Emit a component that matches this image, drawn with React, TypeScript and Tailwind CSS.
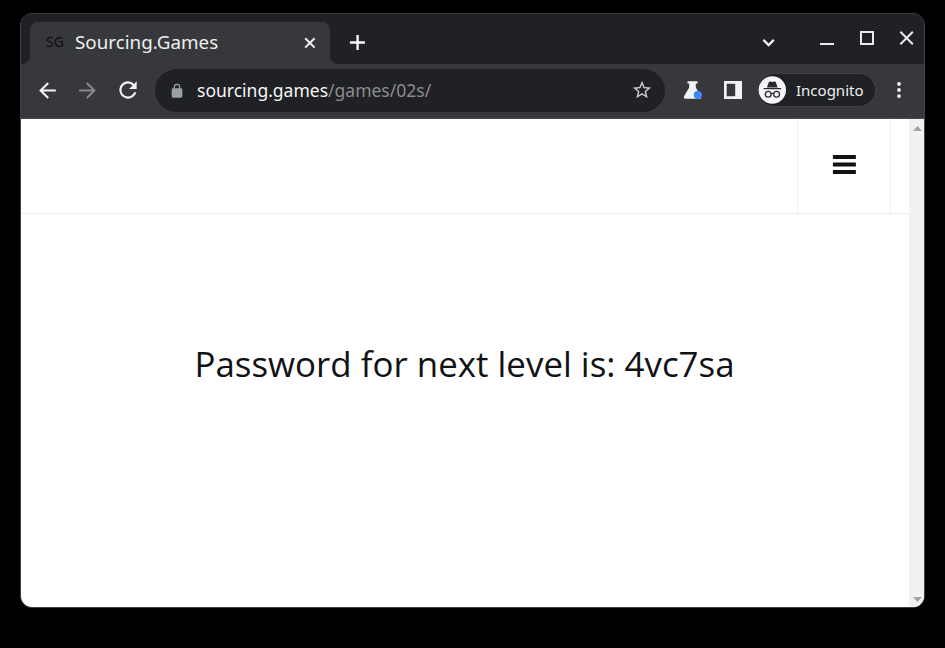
import React from "react";

function TabStrip() {
  return (
    <div className="flex h-[50px] shrink-0 bg-[#202124]">
      <div className="flex w-[9px] flex-col bg-[#37383b]">
        <div className="h-full rounded-br-[8px] bg-[#202124]" />
      </div>
      <div className="w-[300px] bg-[#202124] pt-2">
        <div className="flex h-[42px] items-center rounded-t-[8px] bg-[#37383b] pb-[2px] pl-[16px]">
          <span className="w-[29px] whitespace-nowrap text-[14px] leading-none text-[#0c0d0e]">SG</span>
          <span className="w-[227px] whitespace-nowrap text-[18.8px] leading-6 text-[#eeeff1]">Sourcing.Games</span>
          <svg className="mt-px size-4" viewBox="0 0 16 16" stroke="#f1f3f4" strokeWidth="2">
            <path d="M3.2 3.2l9.4 9.4M12.6 3.2l-9.4 9.4" />
          </svg>
        </div>
      </div>
      <div className="flex flex-1 bg-[#37383b]">
        <div className="flex flex-1 items-center rounded-bl-[8px] bg-[#202124]">
          <svg className="ml-[19px] mt-[6px] size-4" viewBox="0 0 16 16" stroke="#f8f9fa" strokeWidth="2.4">
            <path d="M8.6 1v15M.9 8.5h15" />
          </svg>
          <svg className="ml-[396px] mt-[6px] size-4" viewBox="0 0 16 16" fill="none" stroke="#f1f3f4" strokeWidth="2.2">
            <path d="M2.4 5.9L7.6 11.1l5.2-5.2" />
          </svg>
          <svg className="ml-[42px] size-4" viewBox="0 0 16 16" fill="none" stroke="#e8eaed" strokeWidth="2">
            <path d="M1 13h14" />
          </svg>
          <svg className="ml-[24px] mt-[-2px] size-4" viewBox="0 0 16 16" fill="none" stroke="#e8eaed" strokeWidth="2">
            <path d="M2 2h12v12H2z" />
          </svg>
          <svg className="ml-[24px] mt-[-2px] size-4" viewBox="0 0 16 16" fill="none" stroke="#e8eaed" strokeWidth="2">
            <path d="M1.4 1.8l12.4 12.4M13.8 1.8L1.4 14.2" />
          </svg>
        </div>
      </div>
    </div>
  );
}

function Toolbar() {
  return (
    <div className="flex h-[55px] shrink-0 items-center border-b border-[#49494c] bg-[#37383b] pb-[2px]">
      <svg className="ml-[14px] size-[25px] shrink-0" viewBox="0 0 24 24" fill="#f1f3f4">
        <path d="M20 11H7.83l5.59-5.59L12 4l-8 8 8 8 1.41-1.41L7.83 13H20v-2z" />
      </svg>
      <svg className="ml-[15px] size-[25px] shrink-0" viewBox="0 0 24 24" fill="#87888b">
        <path d="M12 4l-1.41 1.41L16.17 11H4v2h12.17l-5.58 5.59L12 20l8-8z" />
      </svg>
      <svg className="ml-[15px] size-[26px] shrink-0" viewBox="0 0 24 24" fill="#f1f3f4">
        <path d="M17.65 6.35A7.96 7.96 0 0 0 12 4a8 8 0 1 0 7.73 10h-2.08A6 6 0 1 1 12 6c1.66 0 3.14.69 4.22 1.78L13 11h7V4l-2.35 2.35z" />
      </svg>
      <div className="ml-[14px] flex h-[43px] w-[510px] shrink-0 items-center rounded-full bg-[#202124]">
        <svg className="ml-[14px] mt-[2px] size-4" viewBox="0 0 24 24" fill="#9aa0a6">
          <path d="M18 8h-1V6A5 5 0 0 0 7 6v2H6a2 2 0 0 0-2 2v10c0 1.1.9 2 2 2h12a2 2 0 0 0 2-2V10a2 2 0 0 0-2-2zM8.9 8V6a3.1 3.1 0 0 1 6.2 0v2z" />
        </svg>
        <span className="ml-[12px] w-[434px] whitespace-nowrap text-[17.5px] leading-6 text-[#f4f5f6]">
          sourcing.games<span className="text-[#8b8c8f]">/games/02s/</span>
        </span>
        <svg className="size-[22px]" viewBox="0 0 24 24" fill="#c8cacd">
          <path d="M22 9.24l-7.19-.62L12 2 9.19 8.63 2 9.24l5.46 4.73L5.82 21 12 17.27 18.18 21l-1.63-7.03L22 9.24zM12 15.4l-3.76 2.27 1-4.28-3.32-2.88 4.38-.38L12 6.1l1.71 4.04 4.38.38-3.32 2.88 1 4.28L12 15.4z" />
        </svg>
      </div>
      <svg className="ml-[18px] size-5 shrink-0" viewBox="0 0 20 20">
        <path fill="#f1f3f4" d="M4.5 1.2h10v2.2h-1.7v4l5.2 9.1v2.2H2.5C.9 18.7.4 17.3 1.2 16L6.2 7.4v-4H4.5z" />
        <circle cx="14.8" cy="15" r="4.2" fill="#4285f4" />
      </svg>
      <svg className="ml-[20px] size-5 shrink-0" viewBox="0 0 20 20">
        <path fill="#f1f3f4" fillRule="evenodd" d="M1 1h18v18H1zM3.7 3.8v12.4h8.5V3.8z" />
      </svg>
      <div className="ml-[14px] flex h-[34px] w-[119px] shrink-0 items-center rounded-full border border-[#414245] bg-[#202124]">
        <svg className="size-7 shrink-0" viewBox="0 0 28 28">
          <circle cx="14.3" cy="14" r="13.7" fill="#f5f6f7" />
          <path fill="#292a2d" d="M10.9 6c.2-.6.7-.7 1.2-.5l2.2.6 2.2-.6c.5-.2 1 0 1.2.5l2 5.6H8.9zM5.6 12h17.6v1.200H5.600z" />
          <g fill="none" stroke="#292a2d" strokeWidth="1.3">
            <circle cx="10.2" cy="18.2" r="2.9" />
            <circle cx="18.6" cy="18.2" r="2.9" />
            <path d="M13 17.8c.8-.5 1.800-.5 2.600 0" />
          </g>
        </svg>
        <span className="ml-[10px] whitespace-nowrap text-[15px] leading-5 text-[#eeeff1]">Incognito</span>
      </div>
      <svg className="ml-[15px] size-4 shrink-0" viewBox="0 0 16 16" fill="#f1f3f4">
        <circle cx="8" cy="1.9" r="1.9" />
        <circle cx="8" cy="8" r="1.9" />
        <circle cx="8" cy="14.1" r="1.9" />
      </svg>
    </div>
  );
}

function Page() {
  return (
    <div className="flex min-h-0 flex-1 bg-white">
      <div className="flex flex-1 flex-col">
        <header className="flex h-[95px] justify-end border-b border-[#eeeeee]">
          <div className="mr-[18px] flex w-[94px] items-center justify-center border-x border-[#f0f0f0] pb-[4px]">
            <svg className="h-[20px] w-6" viewBox="0 0 24 20" fill="#111214">
              <rect x=".9" y="1" width="23" height="3.9" rx=".5" />
              <rect x=".9" y="8.5" width="23" height="3.9" rx=".5" />
              <rect x=".9" y="16" width="23" height="3.9" rx=".5" />
            </svg>
          </div>
        </header>
        <main className="flex justify-center pr-px pt-[125px]">
          <h1 className="whitespace-nowrap font-['Open_Sans',sans-serif] text-[34.9px] leading-[50px] text-[#111214]">Password for next level is: 4vc7sa</h1>
        </main>
      </div>
      <div className="flex w-[15px] flex-col items-center justify-between bg-[#f1f1f1] pb-[5px] pl-[2px] pt-[7px]">
        <svg className="h-[5px] w-[9px]" viewBox="0 0 9 5" fill="#a3a3a3"><path d="M0 5l4.5-5L9 5z" /></svg>
        <svg className="h-[5px] w-[9px]" viewBox="0 0 9 5" fill="#a3a3a3"><path d="M0 0l4.5 5L9 0z" /></svg>
      </div>
    </div>
  );
}

export default function App() {
  return (
    <div className="h-[648px] w-[945px] overflow-hidden bg-black pl-5 pt-[13px] font-['Noto_Sans','Open_Sans',sans-serif]">
      <div className="flex h-[595px] w-[905px] flex-col overflow-hidden rounded-[12px] border border-[#3f4042] bg-[#37383b]">
        <TabStrip />
        <Toolbar />
        <Page />
      </div>
    </div>
  );
}
